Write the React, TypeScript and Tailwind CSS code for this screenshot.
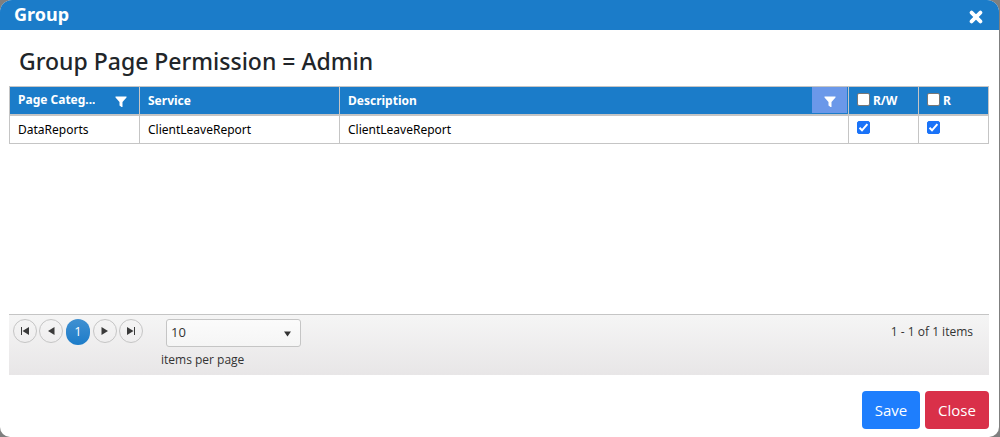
import React, { useState } from 'react';

interface PermissionRow {
  category: string;
  service: string;
  description: string;
  readWrite: boolean;
  read: boolean;
}

const initialRows: PermissionRow[] = [
  {
    category: 'DataReports',
    service: 'ClientLeaveReport',
    description: 'ClientLeaveReport',
    readWrite: true,
    read: true
  }
];

const FilterIcon = () => (
  <svg width="12" height="12" viewBox="0 0 12 12" fill="currentColor" aria-hidden="true">
    <path d="M0.5 0.5H11.5V1.5L7.5 6V11H6.5L4.5 9.5V6L0.5 1.5Z" />
  </svg>
);

const CloseIcon = () => (
  <svg width="14" height="14" viewBox="0 0 14 14" fill="none" stroke="currentColor" strokeWidth="3.8" aria-hidden="true">
    <path d="M2.6 2.6L11.4 11.4M11.4 2.6L2.6 11.4" strokeLinecap="round" />
  </svg>
);

interface PagerButtonProps {
  label: string;
  path: string;
}

const PagerButton: React.FC<PagerButtonProps> = ({ label, path }) => (
  <button
    type="button"
    aria-label={label}
    className="flex h-6 w-6 items-center justify-center rounded-full border border-[#c5c5c5] text-[#3a3a3a]"
  >
    <svg width="10" height="10" viewBox="0 0 10 10" fill="currentColor" aria-hidden="true">
      <path d={path} />
    </svg>
  </button>
);

interface CheckboxProps {
  label: string;
  checked: boolean;
  onChange: (checked: boolean) => void;
}

const Checkbox: React.FC<CheckboxProps> = ({ label, checked, onChange }) => (
  <span className="relative block h-[13px] w-[13px] shrink-0">
    <input
      type="checkbox"
      aria-label={label}
      checked={checked}
      onChange={(e) => onChange(e.target.checked)}
      className="block h-[13px] w-[13px] appearance-none rounded-[2px] border border-[#767676] bg-white checked:border-[#1a73f8] checked:bg-[#1a73f8]"
    />
    {checked && (
      <svg
        className="pointer-events-none absolute inset-0 text-white"
        width="13"
        height="13"
        viewBox="0 0 13 13"
        fill="none"
        stroke="currentColor"
        strokeWidth="2"
        aria-hidden="true"
      >
        <path d="M2.5 6.8L5 9.3L10.4 3.2" />
      </svg>
    )}
  </span>
);

const App: React.FC = () => {
  const [rows, setRows] = useState(initialRows);
  const [allReadWrite, setAllReadWrite] = useState(false);
  const [allRead, setAllRead] = useState(false);
  const [pageSize, setPageSize] = useState('10');

  const updateRow = (index: number, change: Partial<PermissionRow>) => {
    setRows(rows.map((row, i) => (i === index ? { ...row, ...change } : row)));
  };

  const toggleAllReadWrite = (checked: boolean) => {
    setAllReadWrite(checked);
    setRows(rows.map((row) => ({ ...row, readWrite: checked })));
  };

  const toggleAllRead = (checked: boolean) => {
    setAllRead(checked);
    setRows(rows.map((row) => ({ ...row, read: checked })));
  };

  return (
    <div className="flex min-h-screen bg-[#7f7f7f] pr-px font-['Open_Sans','Noto_Sans',sans-serif]">
      <div className="flex grow flex-col overflow-hidden rounded-t-xl rounded-b-[10px] bg-white">
        <header className="flex h-[30px] items-center justify-between bg-[#1b7cc9] pr-4 pl-[14px] text-white">
          <h1 className="pb-[2px] font-['Noto_Sans','Open_Sans',sans-serif] text-lg leading-7 font-bold">Group</h1>
          <button type="button" aria-label="Close dialog" className="mt-1">
            <CloseIcon />
          </button>
        </header>

        <main className="flex grow flex-col pr-[10px] pl-[9px]">
          <h2 className="mt-4 mb-[10px] pl-[10px] font-['Noto_Sans','Open_Sans',sans-serif] text-[23px] leading-[30px] font-medium text-[#212529]">
            Group Page Permission = Admin
          </h2>

          {/* Permission grid */}
          <div className="grow">
            <table className="w-full table-fixed border-collapse text-left font-['Noto_Sans','Open_Sans',sans-serif] text-xs text-black">
              <colgroup>
                <col className="w-[130px]" />
                <col className="w-[200px]" />
                <col />
                <col className="w-[70px]" />
                <col className="w-[70px]" />
              </colgroup>
              <thead className="bg-[#1b7cc9] text-white">
                <tr className="h-7">
                  <th className="border border-b-2 border-[#c5c5c5] p-0">
                    <div className="flex items-center justify-between pr-3 pl-2">
                      <span className="truncate">Page Categ...</span>
                      <button type="button" aria-label="Filter page category" className="pt-1">
                        <FilterIcon />
                      </button>
                    </div>
                  </th>
                  <th className="border border-b-2 border-[#c5c5c5] px-2 pt-[2px] pb-0">Service</th>
                  <th className="border border-b-2 border-[#c5c5c5] p-0">
                    <div className="flex h-[26px] items-center justify-between pr-px pl-2">
                      <span className="pt-[2px]">Description</span>
                      <button
                        type="button"
                        aria-label="Filter description"
                        className="flex h-full w-[35px] items-center justify-center bg-[#6b98e9] pt-1"
                      >
                        <FilterIcon />
                      </button>
                    </div>
                  </th>
                  <th className="border border-b-2 border-[#c5c5c5] px-2 pt-[2px] pb-0">
                    <div className="flex items-start gap-[3px]">
                      <Checkbox label="R/W for all pages" checked={allReadWrite} onChange={toggleAllReadWrite} />
                      <span>R/W</span>
                    </div>
                  </th>
                  <th className="border border-b-2 border-[#c5c5c5] px-2 pt-[2px] pb-0">
                    <div className="flex items-start gap-[3px]">
                      <Checkbox label="R for all pages" checked={allRead} onChange={toggleAllRead} />
                      <span>R</span>
                    </div>
                  </th>
                </tr>
              </thead>
              <tbody>
                {rows.map((row, index) => (
                  <tr key={row.service} className="h-[29px]">
                    <td className="border border-[#c5c5c5] px-2 pt-[2px] pb-0">{row.category}</td>
                    <td className="border border-[#c5c5c5] px-2 pt-[2px] pb-0">{row.service}</td>
                    <td className="border border-[#c5c5c5] px-2 pt-[2px] pb-0">{row.description}</td>
                    <td className="border border-[#c5c5c5] px-2 pt-0 pb-1">
                      <Checkbox
                        label={`R/W for ${row.service}`}
                        checked={row.readWrite}
                        onChange={(checked) => updateRow(index, { readWrite: checked })}
                      />
                    </td>
                    <td className="border border-[#c5c5c5] px-2 pt-0 pb-1">
                      <Checkbox
                        label={`R for ${row.service}`}
                        checked={row.read}
                        onChange={(checked) => updateRow(index, { read: checked })}
                      />
                    </td>
                  </tr>
                ))}
              </tbody>
            </table>
          </div>

          {/* Pager */}
          <div className="flex h-[61px] items-start border-t border-[#c5c5c5] bg-linear-to-b from-[#f5f5f5] to-[#e8e6e7] pt-1 pr-4 pl-1 text-xs text-[#333]">
            <nav aria-label="Pages" className="flex gap-[2px]">
              <PagerButton label="First page" path="M1 1H2V9H1ZM9 1V9L2.5 5Z" />
              <PagerButton label="Previous page" path="M8.5 1V9L2 5Z" />
              <button
                type="button"
                aria-current="page"
                className="mx-px h-[26px] w-6 rounded-full bg-linear-to-b from-[#3f90d1] to-[#1b7cc9] text-[13px] text-white"
              >
                1
              </button>
              <PagerButton label="Next page" path="M1.5 1V9L8 5Z" />
              <PagerButton label="Last page" path="M8 1H9V9H8ZM1 1V9L7.5 5Z" />
            </nav>
            <div className="ml-[18px] flex flex-col">
              <div className="relative ml-[5px] w-[135px]">
                <select
                  id="page-size"
                  value={pageSize}
                  onChange={(e) => setPageSize(e.target.value)}
                  className="h-7 w-full appearance-none rounded-[3px] border border-[#c5c5c5] bg-linear-to-b from-[#fbfbfb] to-[#f5f5f5] pl-1 text-[13px]"
                >
                  <option value="10">10</option>
                  <option value="20">20</option>
                  <option value="50">50</option>
                </select>
                <svg
                  className="pointer-events-none absolute top-3 right-[10px]"
                  width="7"
                  height="6"
                  viewBox="0 0 7 6"
                  fill="currentColor"
                  aria-hidden="true"
                >
                  <path d="M0 0.5H7L3.5 5.5Z" />
                </svg>
              </div>
              <label htmlFor="page-size" className="mt-1 leading-[18px]">
                items per page
              </label>
            </div>
            <span className="ml-auto pt-1 leading-[18px]">1 - 1 of 1 items</span>
          </div>
        </main>

        <footer className="flex justify-end gap-[5px] pt-4 pr-[10px] pb-2 text-[15px] text-white">
          <button type="button" className="h-[38px] w-[58px] rounded bg-[#1e7efd]">
            Save
          </button>
          <button type="button" className="h-[38px] w-16 rounded bg-[#d93049]">
            Close
          </button>
        </footer>
      </div>
    </div>
  );
};

export default App;
